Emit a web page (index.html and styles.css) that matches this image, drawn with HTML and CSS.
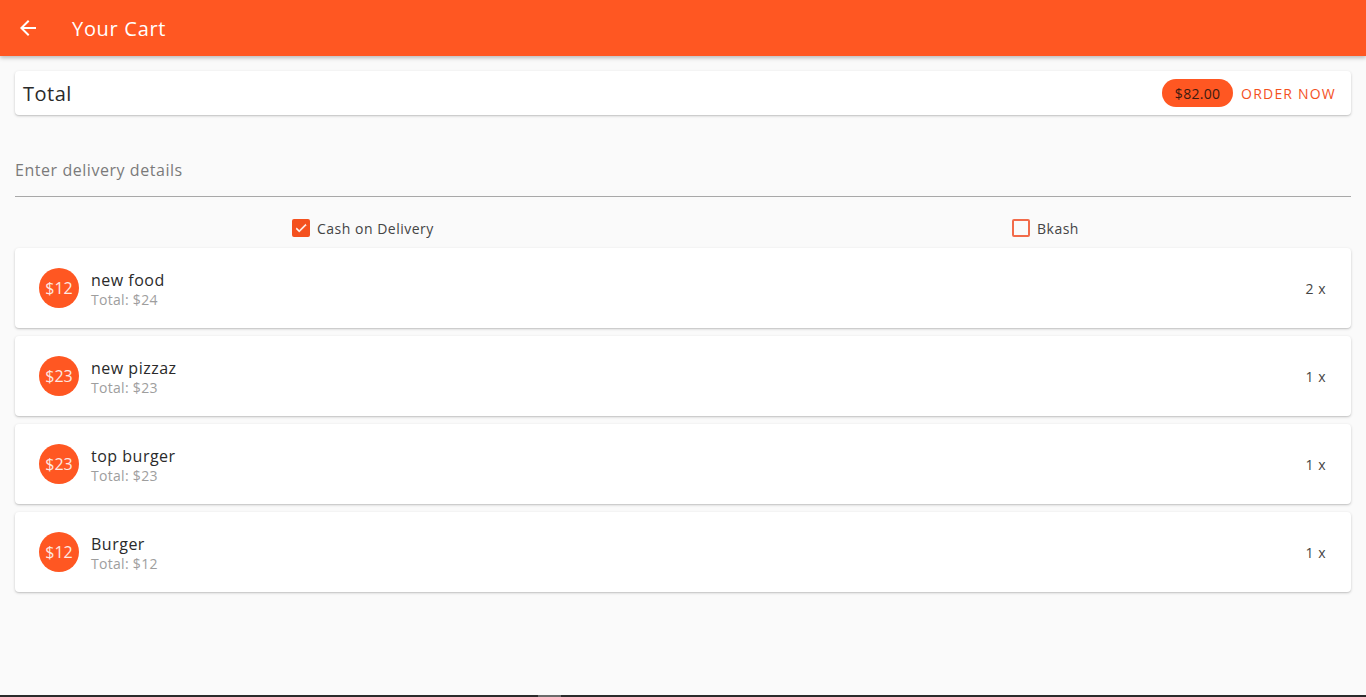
FILE: index.html
```html
<!DOCTYPE html>
<html lang="en">
<head>
<meta charset="utf-8">
<title>Your Cart</title>
<link rel="stylesheet" href="styles.css">
</head>
<body>
<header class="appbar">
  <button class="back" aria-label="Back">
    <svg width="24" height="24" viewBox="0 0 24 24"><path d="M20 11H7.83l5.59-5.59L12 4l-8 8 8 8 1.41-1.41L7.83 13H20v-2z" fill="#fff"/></svg>
  </button>
  <h1 class="title">Your Cart</h1>
</header>
<main class="content">
  <section class="card total-card">
    <span class="total-label">Total</span>
    <div class="total-actions">
      <span class="chip">$82.00</span>
      <button class="order-btn">ORDER NOW</button>
    </div>
  </section>

  <div class="field">
    <span class="field-label">Enter delivery details</span>
  </div>

  <div class="options">
    <label class="option option-cash">
      <span class="box checked">
        <svg width="14" height="14" viewBox="0 0 24 24"><path d="M9 16.2L4.8 12l-1.4 1.4L9 19 21 7l-1.4-1.4L9 16.2z" fill="#fff" stroke="#fff" stroke-width="1"/></svg>
      </span>
      <span class="option-text">Cash on Delivery</span>
    </label>
    <label class="option option-bkash">
      <span class="box"></span>
      <span class="option-text">Bkash</span>
    </label>
  </div>

  <ul class="items">
    <li class="card item">
      <span class="avatar">$12</span>
      <div class="item-text"><span class="item-name">new food</span><span class="item-sub">Total: $24</span></div>
      <span class="qty">2 x</span>
    </li>
    <li class="card item">
      <span class="avatar">$23</span>
      <div class="item-text"><span class="item-name">new pizzaz</span><span class="item-sub">Total: $23</span></div>
      <span class="qty">1 x</span>
    </li>
    <li class="card item">
      <span class="avatar">$23</span>
      <div class="item-text"><span class="item-name">top burger</span><span class="item-sub">Total: $23</span></div>
      <span class="qty">1 x</span>
    </li>
    <li class="card item">
      <span class="avatar">$12</span>
      <div class="item-text"><span class="item-name">Burger</span><span class="item-sub">Total: $12</span></div>
      <span class="qty">1 x</span>
    </li>
  </ul>
</main>
<div class="scrollbar"><span class="thumb"></span></div>
</body>
</html>
```

FILE: styles.css
```css
* { box-sizing: border-box; }
html, body {
  margin: 0;
  height: 697px;
  overflow: hidden;
}
body {
  background: #fafafa;
  font-family: "Open Sans", "Noto Sans", sans-serif;
  color: #212121;
  display: flex;
  flex-direction: column;
}
.appbar {
  height: 56px;
  flex: none;
  background: #ff5722;
  display: flex;
  align-items: center;
  padding-left: 16px;
  box-shadow: 0 2px 4px rgba(0,0,0,0.25);
  position: relative;
  z-index: 1;
}
.back {
  width: 24px;
  height: 24px;
  padding: 0;
  border: 0;
  background: none;
  display: flex;
}
.title {
  margin: 0 0 0 32px;
  font-size: 20px;
  font-weight: 400;
  color: #fff;
  letter-spacing: 0.7px;
}
.content {
  flex: 1;
  padding: 15px 15px 0;
}
.card {
  background: #fff;
  border-radius: 4px;
  box-shadow: 0 1px 3px rgba(0,0,0,0.18), 0 1px 1px rgba(0,0,0,0.08);
}
.total-card {
  height: 44px;
  display: flex;
  align-items: center;
  justify-content: space-between;
  padding: 0 16px 0 8px;
}
.total-label {
  font-size: 20px;
  color: #2a2a2a;
  letter-spacing: 0.5px;
}
.total-actions {
  display: flex;
  align-items: center;
  gap: 8px;
}
.chip {
  height: 28px;
  width: 71px;
  border-radius: 14px;
  background: #ff5722;
  color: #3b1a10;
  font-size: 14px;
  letter-spacing: 0.3px;
  display: flex;
  align-items: center;
  justify-content: center;
}
.order-btn {
  border: 0;
  background: none;
  padding: 0;
  font-family: inherit;
  font-size: 14px;
  color: #f4511e;
  letter-spacing: 1.2px;
  margin-right: -1px;
}
.field {
  padding: 44px 0 15px;
  border-bottom: 1px solid #a8a8a8;
}
.field-label {
  display: block;
  font-size: 16px;
  line-height: 22px;
  color: #7a7a7a;
  letter-spacing: 0.55px;
}
.options {
  margin-top: 11px;
  height: 40px;
  display: grid;
  grid-template-columns: 1fr 1fr;
  align-items: center;
}
.option {
  display: flex;
  align-items: center;
  gap: 7px;
  font-size: 14px;
  color: #444;
  letter-spacing: 0.5px;
}
.option-cash { padding-left: 277px; }
.option-bkash { padding-left: 329px; }
.box {
  width: 18px;
  height: 18px;
  border: 2px solid #f26b4a;
  border-radius: 2px;
  display: flex;
  align-items: center;
  justify-content: center;
}
.box.checked {
  background: #f4511e;
  border-color: #f4511e;
}
.items {
  list-style: none;
  margin: 0;
  padding: 0;
  display: flex;
  flex-direction: column;
  gap: 8px;
}
.item {
  height: 80px;
  display: flex;
  align-items: center;
  padding: 0 25px 0 24px;
}
.avatar {
  width: 40px;
  height: 40px;
  border-radius: 50%;
  background: #ff5722;
  color: #fde9e3;
  font-size: 16px;
  display: flex;
  align-items: center;
  justify-content: center;
  flex: none;
}
.item-text {
  flex: 1;
  display: flex;
  flex-direction: column;
  margin-left: 12px;
  margin-top: 4px;
}
.item-name {
  font-size: 16px;
  line-height: 20px;
  color: #2a2a2a;
  letter-spacing: 0.5px;
}
.item-sub {
  font-size: 14px;
  line-height: 20px;
  color: #9e9e9e;
  letter-spacing: 0.3px;
}
.qty {
  font-size: 14px;
  color: #444;
  letter-spacing: 0.5px;
}
.scrollbar {
  height: 2px;
  flex: none;
  background: #2b2b2b;
  display: flex;
}
.thumb {
  margin-left: 538px;
  width: 23px;
  background: #6a6a6a;
}
```
